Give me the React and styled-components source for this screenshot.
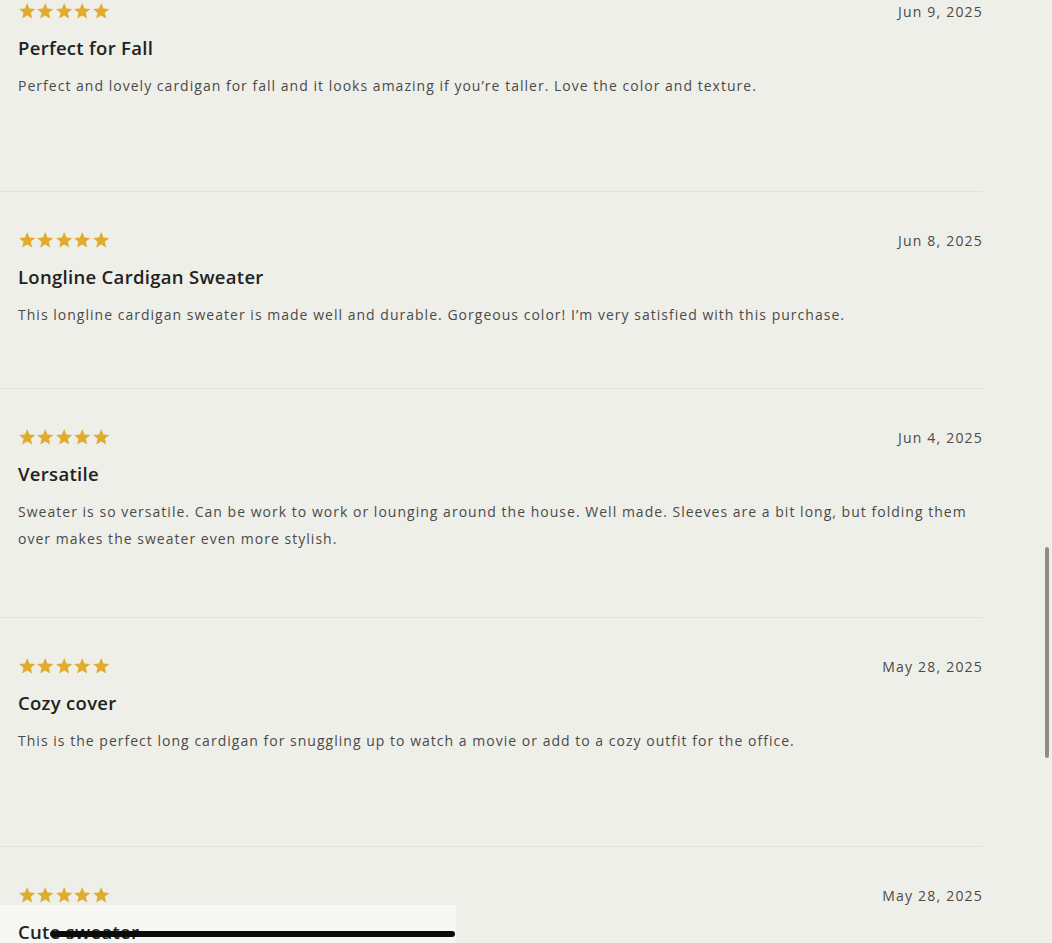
import styled, { createGlobalStyle } from 'styled-components';

const REVIEWS = [
  {
    date: 'Jun 9, 2025',
    title: 'Perfect for Fall',
    body: 'Perfect and lovely cardigan for fall and it looks amazing if you’re taller. Love the color and texture.',
    space: 92,
  },
  {
    date: 'Jun 8, 2025',
    title: 'Longline Cardigan Sweater',
    body: 'This longline cardigan sweater is made well and durable. Gorgeous color! I’m very satisfied with this purchase.',
    space: 60,
  },
  {
    date: 'Jun 4, 2025',
    title: 'Versatile',
    body: 'Sweater is so versatile. Can be work to work or lounging around the house. Well made. Sleeves are a bit long, but folding them over makes the sweater even more stylish.',
    space: 65,
  },
  {
    date: 'May 28, 2025',
    title: 'Cozy cover',
    body: 'This is the perfect long cardigan for snuggling up to watch a movie or add to a cozy outfit for the office.',
    space: 92,
  },
  {
    date: 'May 28, 2025',
    title: 'Cute sweater',
    body: '',
    space: 60,
  },
];

const GlobalStyle = createGlobalStyle`
  html, body {
    margin: 0;
    padding: 0;
    background: #efefea;
    overflow: hidden;
  }
  body {
    font-family: "Open Sans", Lato, sans-serif;
    -webkit-font-smoothing: antialiased;
  }
`;

function Star() {
  return (
    <svg width="18.4" height="18" viewBox="0 0 24 24">
      <path
        d="M12 1.4l3 7.3 7.8.6-5.95 5.08 1.85 7.62L12 17.9l-6.7 4.1 1.85-7.62L1.2 9.3l7.8-.6z"
        fill="#e1ac2d"
      />
    </svg>
  );
}

export default function App() {
  return (
    <Page>
      <GlobalStyle />
      <ProgressShade />
      <List>
        {REVIEWS.map((r, i) => (
          <Review key={i} $space={r.space}>
            <Top>
              <Stars>
                {[0, 1, 2, 3, 4].map((s) => (
                  <Star key={s} />
                ))}
              </Stars>
              <DateText>{r.date}</DateText>
            </Top>
            <Title>{r.title}</Title>
            {r.body && <Body>{r.body}</Body>}
          </Review>
        ))}
      </List>
      <ProgressBar />
      <ScrollThumb />
    </Page>
  );
}

const Page = styled.div`
  position: relative;
  width: 1052px;
  height: 943px;
  overflow: hidden;
  background: #efefea;
`;

const List = styled.div`
  position: relative;
  z-index: 1;
  width: 983px;
`;

const Review = styled.div`
  padding: 39px 1px ${(p) => p.$space}px 18px;
  border-bottom: 1px solid #e2e2dc;

  &:first-child {
    padding-top: 2px;
  }
`;

const Top = styled.div`
  display: flex;
  justify-content: space-between;
  align-items: center;
  height: 18px;
`;

const Stars = styled.div`
  display: flex;
  align-items: center;
`;

const DateText = styled.span`
  font-size: 14px;
  letter-spacing: 1.2px;
  color: #4a4a48;
  margin-right: -1px;
`;

const Title = styled.h3`
  margin: 16px 0 0;
  font-size: 18.5px;
  line-height: 24px;
  font-weight: 600;
  letter-spacing: 0.3px;
  color: #222220;
`;

const Body = styled.p`
  margin: 12px 0 0;
  font-size: 14px;
  line-height: 27px;
  letter-spacing: 1.02px;
  color: #4a4a48;
`;

const ProgressShade = styled.div`
  position: absolute;
  z-index: 0;
  left: 0;
  bottom: 0;
  width: 456px;
  height: 38px;
  background: #f7f7f3;
`;

const ProgressBar = styled.div`
  position: absolute;
  z-index: 2;
  left: 50px;
  width: 405px;
  bottom: 6px;
  height: 6px;
  border-radius: 3px;
  background: #0c0c0c;
`;

const ScrollThumb = styled.div`
  position: absolute;
  z-index: 2;
  right: 3px;
  top: 547px;
  width: 4px;
  height: 211px;
  border-radius: 2px;
  background: #8d8d8b;
`;
